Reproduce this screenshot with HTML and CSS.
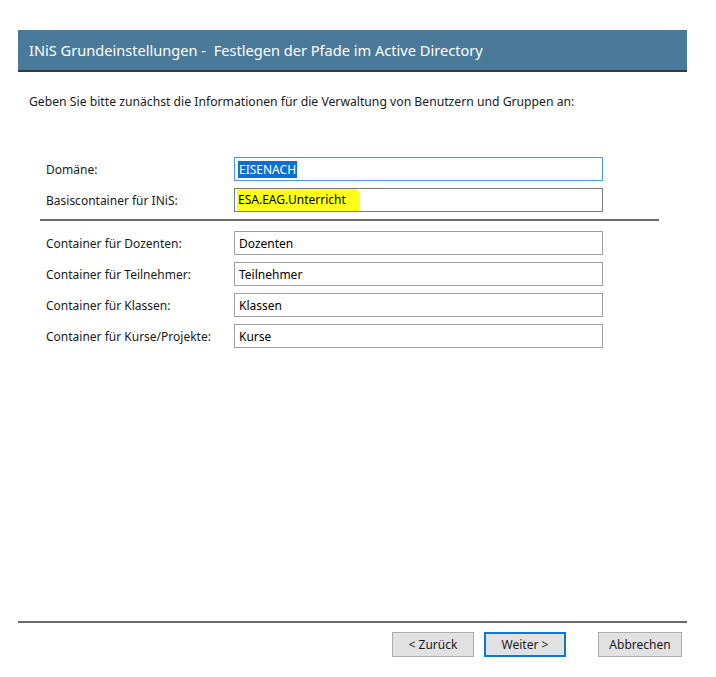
FILE: index.html
```html
<!DOCTYPE html>
<html lang="de">

<head>
    <meta charset="UTF-8">
    <meta name="viewport" content="width=device-width, initial-scale=1.0">
    <title>INiS Grundeinstellungen</title>
    <link rel="stylesheet" href="styles.css">
</head>

<body>
    <div class="dialog">
        <div class="header">
            <h1 class="title">INiS Grundeinstellungen - &nbsp;Festlegen der Pfade im Active Directory</h1>
        </div>

        <p class="intro">Geben Sie bitte zunächst die Informationen für die Verwaltung von Benutzern und Gruppen an:</p>

        <div class="form">
            <div class="row">
                <label class="label">Domäne:</label>
                <div class="field focused"><span class="selected">EISENACH</span></div>
            </div>
            <div class="row">
                <label class="label">Basiscontainer für INiS:</label>
                <div class="field dark"><span class="marker">ESA.EAG.Unterricht</span></div>
            </div>

            <div class="divider"></div>

            <div class="row">
                <label class="label">Container für Dozenten:</label>
                <div class="field">Dozenten</div>
            </div>
            <div class="row">
                <label class="label">Container für Teilnehmer:</label>
                <div class="field">Teilnehmer</div>
            </div>
            <div class="row">
                <label class="label">Container für Klassen:</label>
                <div class="field">Klassen</div>
            </div>
            <div class="row">
                <label class="label">Container für Kurse/Projekte:</label>
                <div class="field">Kurse</div>
            </div>
        </div>

        <div class="footer">
            <div class="buttons">
                <button class="btn">&lt; Zurück</button>
                <button class="btn default">Weiter &gt;</button>
                <button class="btn cancel">Abbrechen</button>
            </div>
        </div>
    </div>
</body>

</html>
```

FILE: styles.css
```css
* {
    margin: 0;
    padding: 0;
    box-sizing: border-box;
}

body {
    background: #fff;
    font-family: "Noto Sans", "Open Sans", sans-serif;
    font-size: 12px;
    color: #1a1a1a;
}

.dialog {
    height: 677px;
    width: 669px;
    margin-left: 18px;
    padding: 30px 0 20px;
    display: flex;
    flex-direction: column;
}

/* blue title bar */
.header {
    height: 42px;
    background: #4a7a99;
    border-bottom: 2px solid #2e3a40;
    display: flex;
    align-items: center;
    padding-left: 11px;
}

.title {
    font-weight: normal;
    font-size: 14.6px;
    color: #fff;
    white-space: nowrap;
}

.intro {
    margin: 22px 0 0 11px;
    line-height: 16px;
    font-size: 12.2px;
}

.form {
    margin-top: 47px;
    padding-left: 22px;
}

.row {
    display: flex;
    align-items: center;
    height: 24px;
    margin-bottom: 7px;
}

.label {
    width: 194px;
    padding-left: 6px;
}

.field {
    width: 369px;
    height: 24px;
    border: 1px solid #a0a0a0;
    padding: 0 4px;
    display: flex;
    align-items: center;
    color: #000;
}

.field.focused {
    border-color: #4a9ae0;
}

.field.dark {
    border-color: #7a7a7a;
}

.selected {
    background: #0f6fd1;
    color: #fff;
    padding: 0 1px;
    margin-left: -1px;
}

.marker {
    background: #ffff1a;
    padding: 2px 14px 3px 1px;
    margin-left: -2px;
    border-radius: 1px 6px 2px 1px;
}

.divider {
    width: 619px;
    height: 2px;
    background: #6a6a6a;
    margin: 3px 0 10px;
}

.footer {
    margin-top: auto;
    border-top: 2px solid #6a6a6a;
    padding-top: 9px;
}

.buttons {
    display: flex;
    justify-content: flex-end;
    gap: 10px;
    padding-right: 5px;
}

.btn {
    font-family: inherit;
    font-size: 12px;
    color: #1a1a1a;
    width: 82px;
    height: 25px;
    background: #e1e1e1;
    border: 1px solid #adadad;
}

.btn.default {
    border: 2px solid #0a78d4;
}

.btn.cancel {
    width: 84px;
    margin-left: 22px;
}
```
